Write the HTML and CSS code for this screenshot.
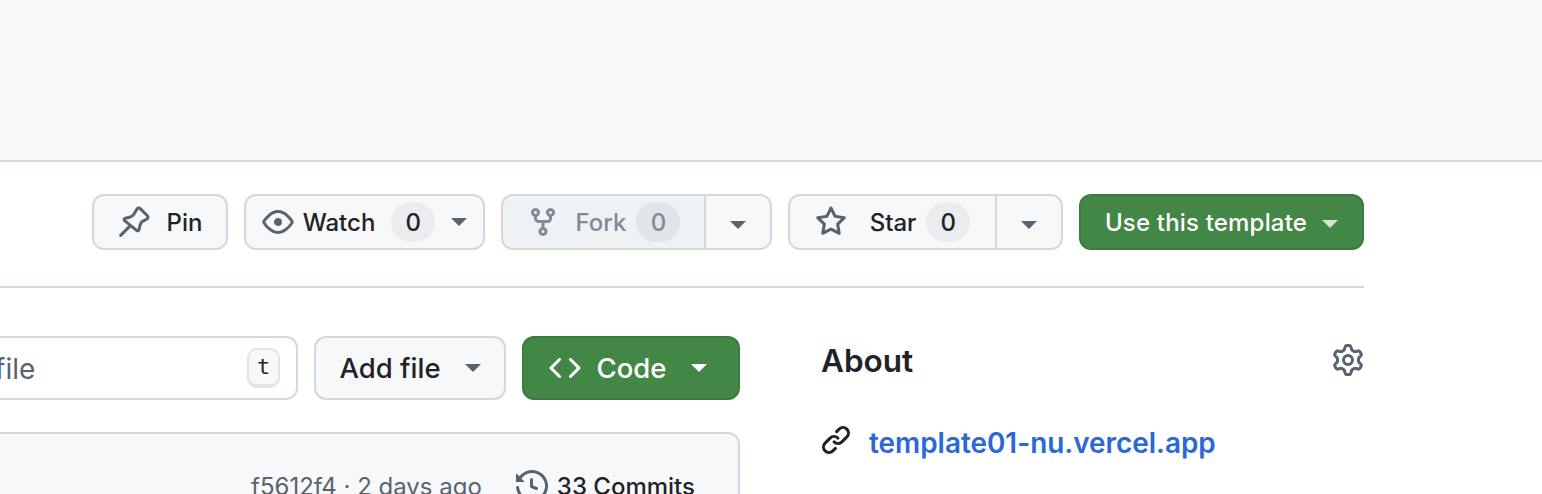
FILE: index.html
```html
<!DOCTYPE html>
<html lang="en">
<head>
<meta charset="utf-8">
<title>template01</title>
<link rel="stylesheet" href="styles.css">
</head>
<body>
<header class="top-band"></header>
<div class="page">
  <div class="actions">
    <button class="btn btn-pin">
      <svg class="icon" viewBox="0 0 16 16"><path class="stroke" d="M1.3 14.7l4.4-4.4M9.5 1.5a1 1 0 0 1 1.6-.2l3.6 3.6a1 1 0 0 1-.2 1.6l-2.2 1.2a2.5 2.5 0 0 0-1.2 1.6l-.6 2.5a.7.7 0 0 1-1.2.4L3.3 7.3a.7.7 0 0 1 .4-1.2l2.5-.6a2.5 2.5 0 0 0 1.6-1.2z"/></svg>
      <span>Pin</span>
    </button>
    <button class="btn btn-watch">
      <svg class="icon" viewBox="0 0 16 16"><path d="M8 2c1.981 0 3.671.992 4.933 2.078 1.27 1.091 2.187 2.345 2.637 3.023a1.62 1.62 0 0 1 0 1.798c-.45.678-1.367 1.932-2.637 3.023C11.67 13.008 9.981 14 8 14c-1.981 0-3.671-.992-4.933-2.078C1.797 10.83.88 9.576.43 8.898a1.62 1.62 0 0 1 0-1.798c.45-.677 1.367-1.931 2.637-3.022C4.33 2.992 6.019 2 8 2ZM1.679 7.932a.12.12 0 0 0 0 .136c.411.622 1.241 1.75 2.366 2.717C5.176 11.758 6.527 12.5 8 12.5c1.473 0 2.825-.742 3.955-1.715 1.124-.967 1.954-2.096 2.366-2.717a.12.12 0 0 0 0-.136c-.412-.621-1.242-1.75-2.366-2.717C10.824 4.242 9.473 3.5 8 3.5c-1.473 0-2.825.742-3.955 1.715-1.124.967-1.954 2.096-2.366 2.717ZM8 10a2 2 0 1 1-.001-3.999A2 2 0 0 1 8 10Z"/></svg>
      <span>Watch</span>
      <span class="counter">0</span>
      <i class="caret"></i>
    </button>
    <div class="split split-fork">
      <button class="btn seg-main seg-disabled">
        <svg class="icon" viewBox="0 0 16 16"><path d="M5 5.372v.878c0 .414.336.75.75.75h4.5a.75.75 0 0 0 .75-.75v-.878a2.25 2.25 0 1 1 1.5 0v.878a2.25 2.25 0 0 1-2.25 2.25h-1.5v2.128a2.251 2.251 0 1 1-1.5 0V8.5h-1.5A2.25 2.25 0 0 1 3.5 6.25v-.878a2.25 2.25 0 1 1 1.5 0ZM5 3.25a.75.75 0 1 0-1.5 0 .75.75 0 0 0 1.5 0Zm6.75.75a.75.75 0 1 0 0-1.5.75.75 0 0 0 0 1.5Zm-3 8.75a.75.75 0 1 0-1.5 0 .75.75 0 0 0 1.5 0Z"/></svg>
        <span>Fork</span>
        <span class="counter">0</span>
      </button>
      <button class="btn seg-drop"><i class="caret"></i></button>
    </div>
    <div class="split split-star">
      <button class="btn seg-main">
        <svg class="icon" viewBox="0 0 16 16"><path d="M8 .25a.75.75 0 0 1 .673.418l1.882 3.815 4.21.612a.75.75 0 0 1 .416 1.279l-3.046 2.97.719 4.192a.751.751 0 0 1-1.088.791L8 12.347l-3.766 1.98a.75.75 0 0 1-1.088-.79l.72-4.194L.818 6.374a.75.75 0 0 1 .416-1.28l4.21-.611L7.327.668A.75.75 0 0 1 8 .25Zm0 2.445L6.615 5.5a.75.75 0 0 1-.564.41l-3.097.45 2.24 2.184a.75.75 0 0 1 .216.664l-.528 3.084 2.769-1.456a.75.75 0 0 1 .698 0l2.77 1.456-.53-3.084a.75.75 0 0 1 .216-.664l2.24-2.183-3.096-.45a.75.75 0 0 1-.564-.41L8 2.694Z"/></svg>
        <span>Star</span>
        <span class="counter">0</span>
      </button>
      <button class="btn seg-drop"><i class="caret"></i></button>
    </div>
    <button class="btn btn-green btn-template">
      <span>Use this template</span>
      <i class="caret"></i>
    </button>
  </div>

  <div class="layout">
    <main class="files">
      <div class="file-tools">
        <div class="search">
          <span class="search-text">Go to file</span>
          <kbd class="key">t</kbd>
        </div>
        <button class="btn btn-large btn-add"><span>Add file</span><i class="caret"></i></button>
        <button class="btn btn-large btn-green btn-code">
          <svg class="icon" viewBox="0 0 16 16"><path d="m11.28 3.22 4.25 4.25a.75.75 0 0 1 0 1.06l-4.25 4.25a.749.749 0 0 1-1.275-.326.749.749 0 0 1 .215-.734L13.94 8l-3.72-3.72a.749.749 0 0 1 .326-1.275.749.749 0 0 1 .734.215Zm-6.56 0a.751.751 0 0 1 1.042.018.751.751 0 0 1 .018 1.042L2.06 8l3.72 3.72a.749.749 0 0 1-.326 1.275.749.749 0 0 1-.734-.215L.47 8.53a.75.75 0 0 1 0-1.06Z"/></svg>
          <span>Code</span>
          <i class="caret"></i>
        </button>
      </div>
      <div class="commit-box">
        <span class="commit-meta">f5612f4 · 2 days ago</span>
        <span class="commits">
          <svg class="icon" viewBox="0 0 16 16"><path d="m.427 1.927 1.215 1.215a8.002 8.002 0 1 1-1.6 5.685.75.75 0 1 1 1.493-.154 6.5 6.5 0 1 0 1.18-4.458l1.358 1.358A.25.25 0 0 1 3.896 6H.25A.25.25 0 0 1 0 5.75V2.104a.25.25 0 0 1 .427-.177ZM7.75 4a.75.75 0 0 1 .75.75v2.992l2.028.812a.75.75 0 0 1-.557 1.392l-2.5-1A.751.751 0 0 1 7 8.25v-3.5A.75.75 0 0 1 7.75 4Z"/></svg>
          <span class="commit-count">33 Commits</span>
        </span>
      </div>
    </main>
    <aside class="about">
      <div class="about-head">
        <h2>About</h2>
        <svg class="icon" viewBox="0 0 16 16"><path d="M8 0a8.2 8.2 0 0 1 .701.031C9.444.095 9.99.645 10.16 1.29l.288 1.107c.018.066.079.158.212.224.231.114.454.243.668.386.123.082.233.09.299.071l1.103-.303c.644-.176 1.392.021 1.82.63.27.385.506.792.704 1.218.315.675.111 1.422-.364 1.891l-.814.806c-.049.048-.098.147-.088.294.016.257.016.515 0 .772-.01.147.038.246.088.294l.814.806c.475.469.679 1.216.364 1.891a7.977 7.977 0 0 1-.704 1.217c-.428.61-1.176.807-1.82.63l-1.102-.302c-.067-.019-.177-.011-.3.071a5.909 5.909 0 0 1-.668.386c-.133.066-.194.158-.211.224l-.29 1.106c-.168.646-.715 1.196-1.458 1.26a8.006 8.006 0 0 1-1.402 0c-.743-.064-1.289-.614-1.458-1.26l-.289-1.106c-.018-.066-.079-.158-.212-.224a5.738 5.738 0 0 1-.668-.386c-.123-.082-.233-.09-.299-.071l-1.103.303c-.644.176-1.392-.021-1.82-.63a8.12 8.12 0 0 1-.704-1.218c-.315-.675-.111-1.422.363-1.891l.815-.806c.05-.048.098-.147.088-.294a6.214 6.214 0 0 1 0-.772c.01-.147-.038-.246-.088-.294l-.815-.806C.635 6.045.431 5.298.746 4.623a7.92 7.92 0 0 1 .704-1.217c.428-.61 1.176-.807 1.82-.63l1.102.302c.067.019.177.011.3-.071.214-.143.437-.272.668-.386.133-.066.194-.158.211-.224l.29-1.106C6.009.645 6.556.095 7.299.03 7.53.01 7.764 0 8 0Zm-.571 1.525c-.036.003-.108.036-.137.146l-.289 1.105c-.147.561-.549.967-.998 1.189-.173.086-.34.183-.5.29-.417.278-.97.423-1.529.27l-1.103-.303c-.109-.03-.175.016-.195.045-.22.312-.412.644-.573.99-.014.031-.021.11.059.19l.815.806c.411.406.562.957.53 1.456a4.709 4.709 0 0 0 0 .582c.032.499-.119 1.05-.53 1.456l-.815.806c-.081.08-.073.159-.059.19.162.346.353.677.573.989.02.03.085.076.195.046l1.102-.303c.56-.153 1.113-.008 1.53.27.161.107.328.204.501.29.447.222.85.629.997 1.189l.289 1.105c.029.109.101.143.137.146a6.6 6.6 0 0 0 1.142 0c.036-.003.108-.036.137-.146l.289-1.105c.147-.561.549-.967.998-1.189.173-.086.34-.183.5-.29.417-.278.97-.423 1.529-.27l1.103.303c.109.029.175-.016.195-.045.22-.313.411-.644.573-.99.014-.031.021-.11-.059-.19l-.815-.806c-.411-.406-.562-.957-.53-1.456a4.709 4.709 0 0 0 0-.582c-.032-.499.119-1.05.53-1.456l.815-.806c.081-.08.073-.159.059-.19a6.464 6.464 0 0 0-.573-.989c-.02-.03-.085-.076-.195-.046l-1.102.303c-.56.153-1.113.008-1.53-.27a4.44 4.44 0 0 0-.501-.29c-.447-.222-.85-.629-.997-1.189l-.289-1.105c-.029-.11-.101-.143-.137-.146a6.6 6.6 0 0 0-1.142 0ZM11 8a3 3 0 1 1-6 0 3 3 0 0 1 6 0ZM9.5 8a1.5 1.5 0 1 0-3.001.001A1.5 1.5 0 0 0 9.5 8Z"/></svg>
      </div>
      <div class="about-link">
        <svg class="icon" viewBox="0 0 16 16"><path d="m7.775 3.275 1.25-1.25a3.5 3.5 0 1 1 4.95 4.95l-2.5 2.5a3.5 3.5 0 0 1-4.95 0 .751.751 0 0 1 .018-1.042.751.751 0 0 1 1.042-.018 1.998 1.998 0 0 0 2.83 0l2.5-2.5a2.002 2.002 0 0 0-2.83-2.83l-1.25 1.25a.751.751 0 0 1-1.042-.018.751.751 0 0 1-.018-1.042Zm-4.69 9.64a1.998 1.998 0 0 0 2.83 0l1.25-1.25a.751.751 0 0 1 1.042.018.751.751 0 0 1 .018 1.042l-1.25 1.25a3.5 3.5 0 1 1-4.95-4.95l2.5-2.5a3.5 3.5 0 0 1 4.95 0 .751.751 0 0 1-.018 1.042.751.751 0 0 1-1.042.018 1.998 1.998 0 0 0-2.83 0l-2.5 2.5a1.998 1.998 0 0 0 0 2.83Z"/></svg>
        <a href="#">template01-nu.vercel.app</a>
      </div>
    </aside>
  </div>
</div>
</body>
</html>
```

FILE: styles.css
```css
* { box-sizing: border-box; }
html, body { margin: 0; height: 494px; overflow: hidden; background: #fff; }
body { font-family: Inter, "Noto Sans", "Liberation Sans", sans-serif; color: #1f2328; }

.top-band { height: 162px; background: #f6f8fa; border-bottom: 2px solid #d3d6de; }
.page { padding-right: 178px; }

.actions {
  display: flex; justify-content: flex-end; gap: 16px;
  height: 126px; padding: 32px 0 36px;
  border-bottom: 2px solid #d3d6de;
}

.btn {
  display: flex; align-items: center; justify-content: center;
  height: 56px; padding: 0;
  font: 500 24px/1 Inter, sans-serif; color: #1f2328;
  background: #f6f8fa; border: 2px solid #d3d8df; border-radius: 12px;
}
.btn span { padding-top: 2px; }
.icon { width: 32px; height: 32px; fill: #59636e; flex: none; display: block; }
.stroke { fill: none; stroke: #59636e; stroke-width: 1.5; stroke-linecap: round; stroke-linejoin: round; }
.caret {
  display: block; flex: none; width: 0; height: 0;
  border-left: 8px solid transparent; border-right: 8px solid transparent;
  border-top: 8px solid #59636e;
}
.counter {
  display: flex; align-items: center; justify-content: center;
  width: 44px; height: 40px; border-radius: 20px;
  background: #eaecef; font-weight: 500;
}

.btn-pin { width: 136px; gap: 17px; }
.btn-watch { width: 241px; gap: 9px; }
.btn-watch .counter { margin-left: 7px; }
.btn-watch .caret { margin-left: 7px; }

.split { display: flex; }
.seg-main { border-radius: 12px 0 0 12px; gap: 10px; }
.seg-drop { border-left: 0; border-radius: 0 12px 12px 0; width: 66px; }
.seg-drop .caret { margin-top: 6px; }
.split-fork .seg-main { width: 205px; }
.split-star .seg-main { width: 209px; }
.seg-disabled { background: #eff2f5; color: #818b98; }
.seg-disabled .icon { fill: #818b98; }
.seg-disabled .counter { background: #e1e4e9; color: #818b98; }
.split-fork .seg-main span:first-of-type { margin-left: 7px; }
.split-star .seg-main { gap: 10px; }
.split-star .seg-main span:first-of-type { margin-left: 13px; }
.split-star .seg-main .counter { margin-left: 0; }

.btn-green { background: #438747; border-color: #3c7a40; color: #fff; }
.btn-green .icon { fill: #fff; }
.btn-green .caret { border-top-color: #fff; }
.btn-template { width: 285px; gap: 15px; letter-spacing: .18px; }
.btn-template .caret { border-top-color: #d5e4d6; margin-top: 4px; }

.layout { display: flex; padding-top: 48px; }
.files { width: 740px; flex: none; overflow: hidden; }
.file-tools { display: flex; gap: 16px; }
.btn-large { height: 64px; font-size: 27.5px; }
.btn-add { width: 192px; gap: 24px; flex: none; }
.btn-code { width: 218px; gap: 16px; flex: none; padding-right: 6px; }
.btn-code .caret { margin-left: 9px; }

.search {
  display: flex; align-items: center; justify-content: space-between;
  flex: none; width: 400px; height: 64px; margin-left: -102px;
  padding: 2px 16px 0 16px;
  background: #fff; border: 2px solid #d3d8df; border-radius: 12px;
  font-size: 28px; color: #59636e;
}
.key {
  display: flex; align-items: center; justify-content: center;
  width: 33px; height: 40px; margin-top: -2px;
  font: 500 22px/1 "DejaVu Sans Mono", monospace; color: #1f2328;
  background: #f6f8fa; border: 2px solid #e1e5ea; border-bottom-width: 4px; border-radius: 10px;
}

.commit-box {
  display: flex; align-items: flex-start;
  margin: 32px 0 0 -20px; height: 120px;
  padding: 36px 43px 0 0; justify-content: flex-end; gap: 34px;
  background: #f6f8fa; border: 2px solid #d3d8df; border-radius: 12px;
  font-size: 24px; line-height: 32px;
}
.commit-meta { color: #59636e; padding-top: 1px; }
.commits { display: flex; gap: 9px; font-weight: 500; }
.commit-count { padding-top: 1px; }

.about { flex: 1; margin-left: 81px; }
.about-head { display: flex; justify-content: space-between; align-items: center; height: 48px; }
.about-head h2 { margin: 0; padding-top: 2px; font: 600 31.5px/46px Inter, sans-serif; }
.about-link { display: flex; align-items: center; gap: 17px; margin-top: 29px; padding-top: 6px; margin-left: -1px; }
.about-link .icon { fill: #1f2328; }
.about-link a { color: #2a67d8; font-size: 27.9px; font-weight: 600; line-height: 36px; text-decoration: none; padding-top: 6px; }
```
